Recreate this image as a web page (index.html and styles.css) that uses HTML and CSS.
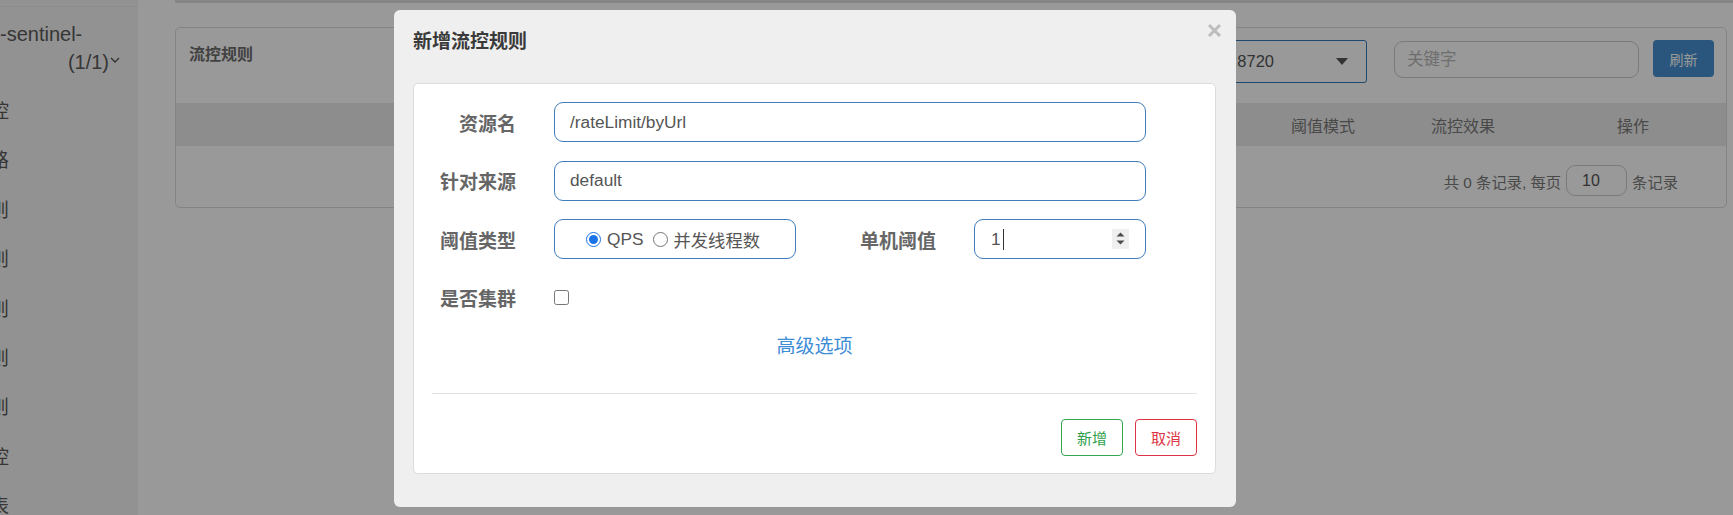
FILE: index.html
```html
<!DOCTYPE html>
<html lang="zh-CN">
<head>
<meta charset="utf-8">
<title>新增流控规则</title>
<link rel="stylesheet" href="styles.css">
</head>
<body>
<div class="page">
  <aside class="sidebar">
    <div class="side-top"></div>
    <div class="app-name">
      <div class="app-line">-sentinel-</div>
      <div class="app-line right">(1/1)<svg class="chev" width="10" height="6" viewBox="0 0 10 6"><path d="M1 1 L5 5 L9 1" fill="none" stroke="#555" stroke-width="1.4"/></svg></div>
    </div>
    <ul class="menu">
      <li>实时监控</li>
      <li>簇点链路</li>
      <li>流控规则</li>
      <li>熔断规则</li>
      <li>热点规则</li>
      <li>系统规则</li>
      <li>授权规则</li>
      <li>集群流控</li>
      <li>机器列表</li>
    </ul>
  </aside>
  <main class="main">
    <div class="top-rule"></div>
    <section class="panel">
      <div class="panel-head">
        <h3 class="panel-title">流控规则</h3>
        <div class="tools">
          <div class="select"><span class="select-text">127.0.0.1:8720</span><svg class="select-caret" width="12" height="7" viewBox="0 0 12 7"><path d="M0 0 H12 L6 7 Z" fill="#555"/></svg></div>
          <div class="search">关键字</div>
          <button class="btn-refresh">刷新</button>
        </div>
      </div>
      <div class="thead">
        <span class="th grow">资源名</span>
        <span class="th c1">阈值模式</span>
        <span class="th c2">流控效果</span>
        <span class="th c3">操作</span>
      </div>
      <div class="pager">共 0 条记录, 每页<span class="page-size">10</span>条记录</div>
    </section>
  </main>
</div>

<div class="overlay"></div>

<div class="modal">
  <div class="modal-head">
    <h4 class="modal-title">新增流控规则</h4>
    <svg class="close" width="15" height="15" viewBox="0 0 15 15"><path d="M2 2 L13 13 M13 2 L2 13" stroke="#bdbdbd" stroke-width="3"/></svg>
  </div>
  <div class="modal-body">
    <div class="form">
      <div class="row">
        <label class="label">资源名</label>
        <div class="input wide">/rateLimit/byUrl</div>
      </div>
      <div class="row">
        <label class="label">针对来源</label>
        <div class="input wide">default</div>
      </div>
      <div class="row">
        <label class="label">阈值类型</label>
        <div class="input radios">
          <label class="radio"><input type="radio" name="grade" checked>QPS</label>
          <label class="radio"><input type="radio" name="grade">并发线程数</label>
        </div>
        <label class="label label2">单机阈值</label>
        <div class="input number"><span class="num-val">1</span><span class="caret"></span><svg class="spin" width="17" height="20" viewBox="0 0 17 20"><rect width="17" height="20" fill="#efefef"/><path d="M4.5 7.5 H12.5 L8.5 3.5 Z M4.5 11.5 H12.5 L8.5 15.5 Z" fill="#4d4d4d"/></svg></div>
      </div>
      <div class="row">
        <label class="label">是否集群</label>
        <input class="check" type="checkbox">
      </div>
      <div class="advanced"><a class="link">高级选项</a></div>
    </div>
    <div class="footer">
      <button class="btn btn-ok">新增</button>
      <button class="btn btn-cancel">取消</button>
    </div>
  </div>
</div>
</body>
</html>
```

FILE: styles.css
```css
* { box-sizing: border-box; }
html, body { margin: 0; padding: 0; }
body {
  width: 1733px;
  height: 515px;
  overflow: hidden;
  font-family: "Liberation Sans", "Noto Sans CJK SC", sans-serif;
  background: #fff;
  color: #333;
}
.page { display: flex; height: 515px; }

/* sidebar */
.sidebar {
  width: 138px;
  flex: none;
  background: #f4f4f4;
  overflow: hidden;
  color: #5a5a5a;
}
.side-top { height: 7px; border-bottom: 1px solid #e9e9e9; }
.app-name {
  width: 120px;
  margin-top: 13px;
  font-size: 20px;
  line-height: 28px;
}
.app-line { white-space: nowrap; }
.app-line.right { text-align: right; }
.chev { vertical-align: top; margin: 9px 0 0 1px; }
.menu {
  list-style: none;
  margin: 11px 0 0 -67px;
  padding: 0;
  font-size: 19px;
}
.menu li { height: 49.4px; line-height: 49.4px; white-space: nowrap; }

/* main */
.main { flex: 1; padding: 0 6px 0 37px; }
.top-rule { height: 3px; background: #dedede; margin-right: -6px; }
.panel {
  margin-top: 24px;
  border: 1px solid #dcdcdc;
  border-radius: 5px;
  height: 181px;
}
.panel-head { display: flex; justify-content: space-between; height: 75px; padding: 0 12px 0 13px; }
.panel-title { margin: 16px 0 0; font-size: 16px; line-height: 22px; font-weight: bold; color: #6e6e6e; }
.tools { display: flex; align-items: flex-start; }
.select {
  width: 260px;
  height: 43px;
  margin-top: 12px;
  border: 1px solid #337ab7;
  border-radius: 3px;
  display: flex;
  align-items: center;
  justify-content: flex-end;
  padding-right: 18px;
  overflow: hidden;
  font-size: 16.5px;
  color: #555;
  white-space: nowrap;
}
.select-text { margin-right: 62px; }
.search {
  width: 245px;
  height: 37px;
  margin: 13px 0 0 27px;
  border: 1px solid #ccc;
  border-radius: 9px;
  padding-left: 12px;
  line-height: 35px;
  font-size: 16.5px;
  color: #b8b8b8;
}
.btn-refresh {
  width: 61px;
  height: 37px;
  margin: 12px 0 0 14px;
  border: 0;
  border-radius: 4px;
  background: #4690d0;
  color: #fff;
  font: 14px "Liberation Sans", "Noto Sans CJK SC", sans-serif;
}
.thead { display: flex; height: 43px; background: #ececec; align-items: center; font-size: 16px; color: #7a7a7a; }
.th { text-align: center; }
.th.grow { flex: 1; visibility: hidden; }
.th.c1 { width: 126px; }
.th.c2 { width: 154px; }
.th.c3 { width: 186px; }
.pager {
  display: flex;
  justify-content: flex-end;
  align-items: center;
  height: 61px;
  padding: 8px 48px 0 0;
  font-size: 15.3px;
  color: #7a7a7a;
  white-space: pre;
}
.page-size {
  width: 61px;
  height: 31px;
  margin: 0 5px;
  border: 1px solid #ccc;
  border-radius: 9px;
  padding-left: 15px;
  line-height: 29px;
  font-size: 16px;
  color: #555;
}

/* overlay + modal */
.overlay { position: fixed; inset: 0; background: rgba(0, 0, 0, 0.4); }
.modal {
  position: fixed;
  left: 394px;
  top: 10px;
  width: 842px;
  height: 497px;
  background: #efefef;
  border-radius: 6px;
}
.modal-head { display: flex; justify-content: space-between; align-items: flex-start; height: 73px; padding: 0 14px 0 19px; }
.modal-title { margin: 20px 0 0; font-size: 19px; line-height: 24px; font-weight: bold; color: #3a3a3a; }
.close { margin-top: 13px; }
.modal-body {
  margin: 0 20px 0 19px;
  background: #fff;
  border: 1px solid #dcdcdc;
  border-radius: 5px;
}
.form { padding-top: 18px; display: flex; flex-direction: column; gap: 18.5px; }
.row { display: flex; align-items: center; height: 40px; }
.label {
  width: 102px;
  flex: none;
  text-align: right;
  font-size: 19px;
  font-weight: bold;
  color: #666;
  margin-right: 38px;
}
.label2 { width: 140px; }
.input {
  height: 40px;
  border: 1px solid #3f7dbd;
  border-radius: 9px;
  display: flex;
  align-items: center;
  font-size: 17.3px;
  color: #555;
}
.input.wide { width: 592px; padding-left: 15px; }
.input.radios { width: 242px; justify-content: center; gap: 9px; padding-right: 4px; }
.radio { display: flex; align-items: center; gap: 6px; font-size: 17.3px; color: #555; }
.radio input { width: 15px; height: 15px; margin: 0; accent-color: #1a73e8; }
.input.number { width: 172px; padding: 0 16px; }
.num-val { color: #555; }
.caret { width: 1.5px; height: 21px; background: #333; margin-left: 2px; }
.spin { margin-left: auto; }
.check { width: 15px; height: 15px; margin: 0; }
.advanced { margin-top: -3px; text-align: center; height: 28px; line-height: 28px; }
.link { font-size: 19px; color: #3d8cd6; }
.footer {
  margin: 32px 18px 0;
  border-top: 1px solid #e3e3e3;
  padding: 25px 0 17px;
  display: flex;
  justify-content: flex-end;
  gap: 12px;
}
.btn {
  width: 62px;
  height: 37px;
  background: #fff;
  border-radius: 4px;
  font: 15px "Liberation Sans", "Noto Sans CJK SC", sans-serif;
}
.btn-ok { border: 1px solid #33a852; color: #2f9e4c; }
.btn-cancel { border: 1px solid #dc3545; color: #dc3545; }
```
